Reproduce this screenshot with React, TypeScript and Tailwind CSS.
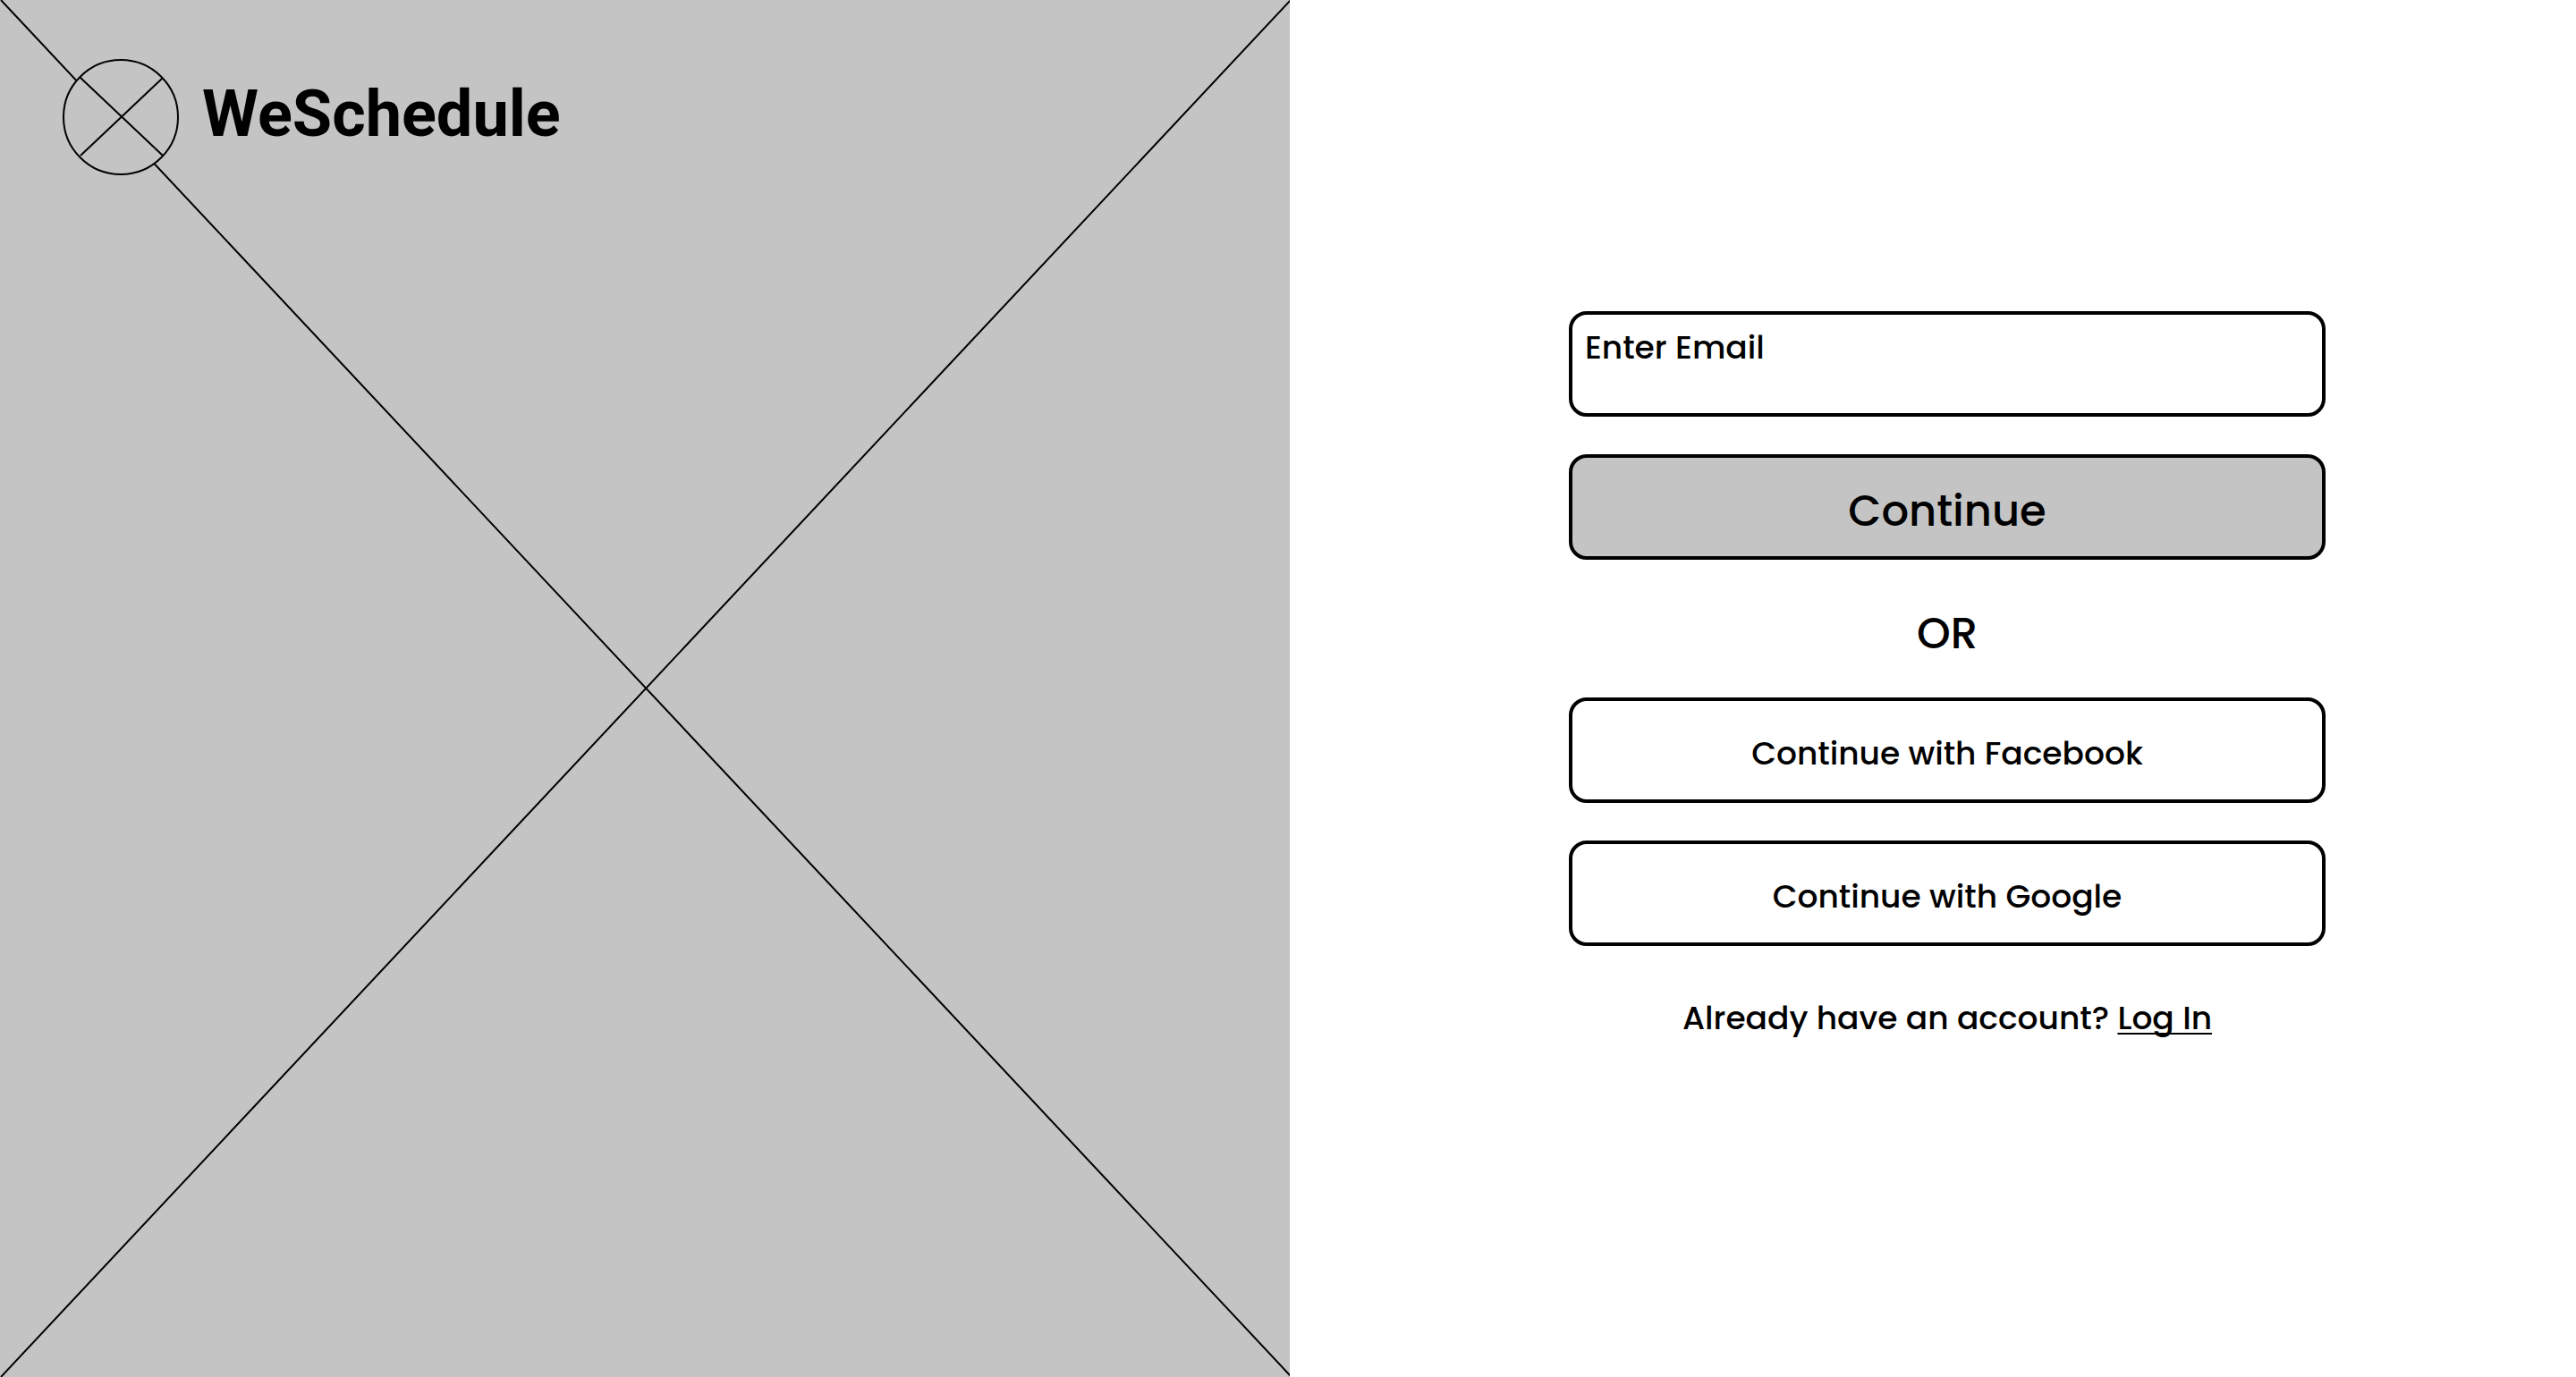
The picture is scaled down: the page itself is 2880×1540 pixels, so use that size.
import { useState } from "react";

const boxClass =
  "block h-[118px] w-full rounded-[20px] border-4 border-black text-black";

/** Crossed-out rectangle that stands in for the hero image. */
function ImagePlaceholder() {
  return (
    <svg
      className="absolute inset-0 h-full w-full"
      viewBox="0 0 1442 1540"
      preserveAspectRatio="none"
      fill="none"
      stroke="black"
      strokeWidth="2"
      aria-hidden="true"
    >
      <path d="M1 0L1443 1539M1443 0L1 1540" vectorEffect="non-scaling-stroke" />
    </svg>
  );
}

function LogoMark() {
  return (
    <svg className="size-[130px] shrink-0" viewBox="0 0 130 130" fill="none" stroke="black" strokeWidth="2" aria-hidden="true">
      <circle cx="65" cy="65" r="64" fill="#c4c4c4" />
      <path d="M19.5 20.5L112 108M111.5 21.5L20 108" />
    </svg>
  );
}

export default function App() {
  const [email, setEmail] = useState("");

  return (
    <div className="grid min-h-screen grid-cols-[1442fr_1438fr] bg-white font-['Poppins','Inter',sans-serif] text-4xl font-medium text-black">
      <aside className="relative bg-[#c4c4c4]">
        <ImagePlaceholder />
        <header className="relative flex items-center gap-[26px] px-[70px] pt-[66px]">
          <LogoMark />
          <h1 className="pb-1.5 font-['Roboto',sans-serif] text-7xl font-bold">WeSchedule</h1>
        </header>
      </aside>

      <main className="flex flex-col items-center justify-center pl-8">
        <form className="w-full max-w-[846px] pb-[26px]" onSubmit={(e) => e.preventDefault()}>
          <div className="flex flex-col gap-[42px]">
            <input
              type="email"
              aria-label="Enter Email"
              placeholder="Enter Email"
              value={email}
              onChange={(e) => setEmail(e.target.value)}
              className={`${boxClass} bg-white px-3.5 pb-[38px] outline-none placeholder:text-black placeholder:opacity-100`}
            />
            <button type="submit" className={`${boxClass} bg-[#c4c4c4] pt-2.5 text-5xl`}>
              Continue
            </button>
          </div>

          <p className="flex h-[154px] items-center justify-center pt-3 text-5xl">OR</p>

          <div className="flex flex-col gap-[42px]">
            <button type="button" className={`${boxClass} bg-white pt-2`}>
              Continue with Facebook
            </button>
            <button type="button" className={`${boxClass} bg-white pt-2`}>
              Continue with Google
            </button>
          </div>

          <p className="pt-[54px] text-center leading-[54px]">
            Already have an account?{" "}
            <a href="#login" className="underline decoration-2 underline-offset-4 [text-decoration-skip-ink:none]">
              Log In
            </a>
          </p>
        </form>
      </main>
    </div>
  );
}
